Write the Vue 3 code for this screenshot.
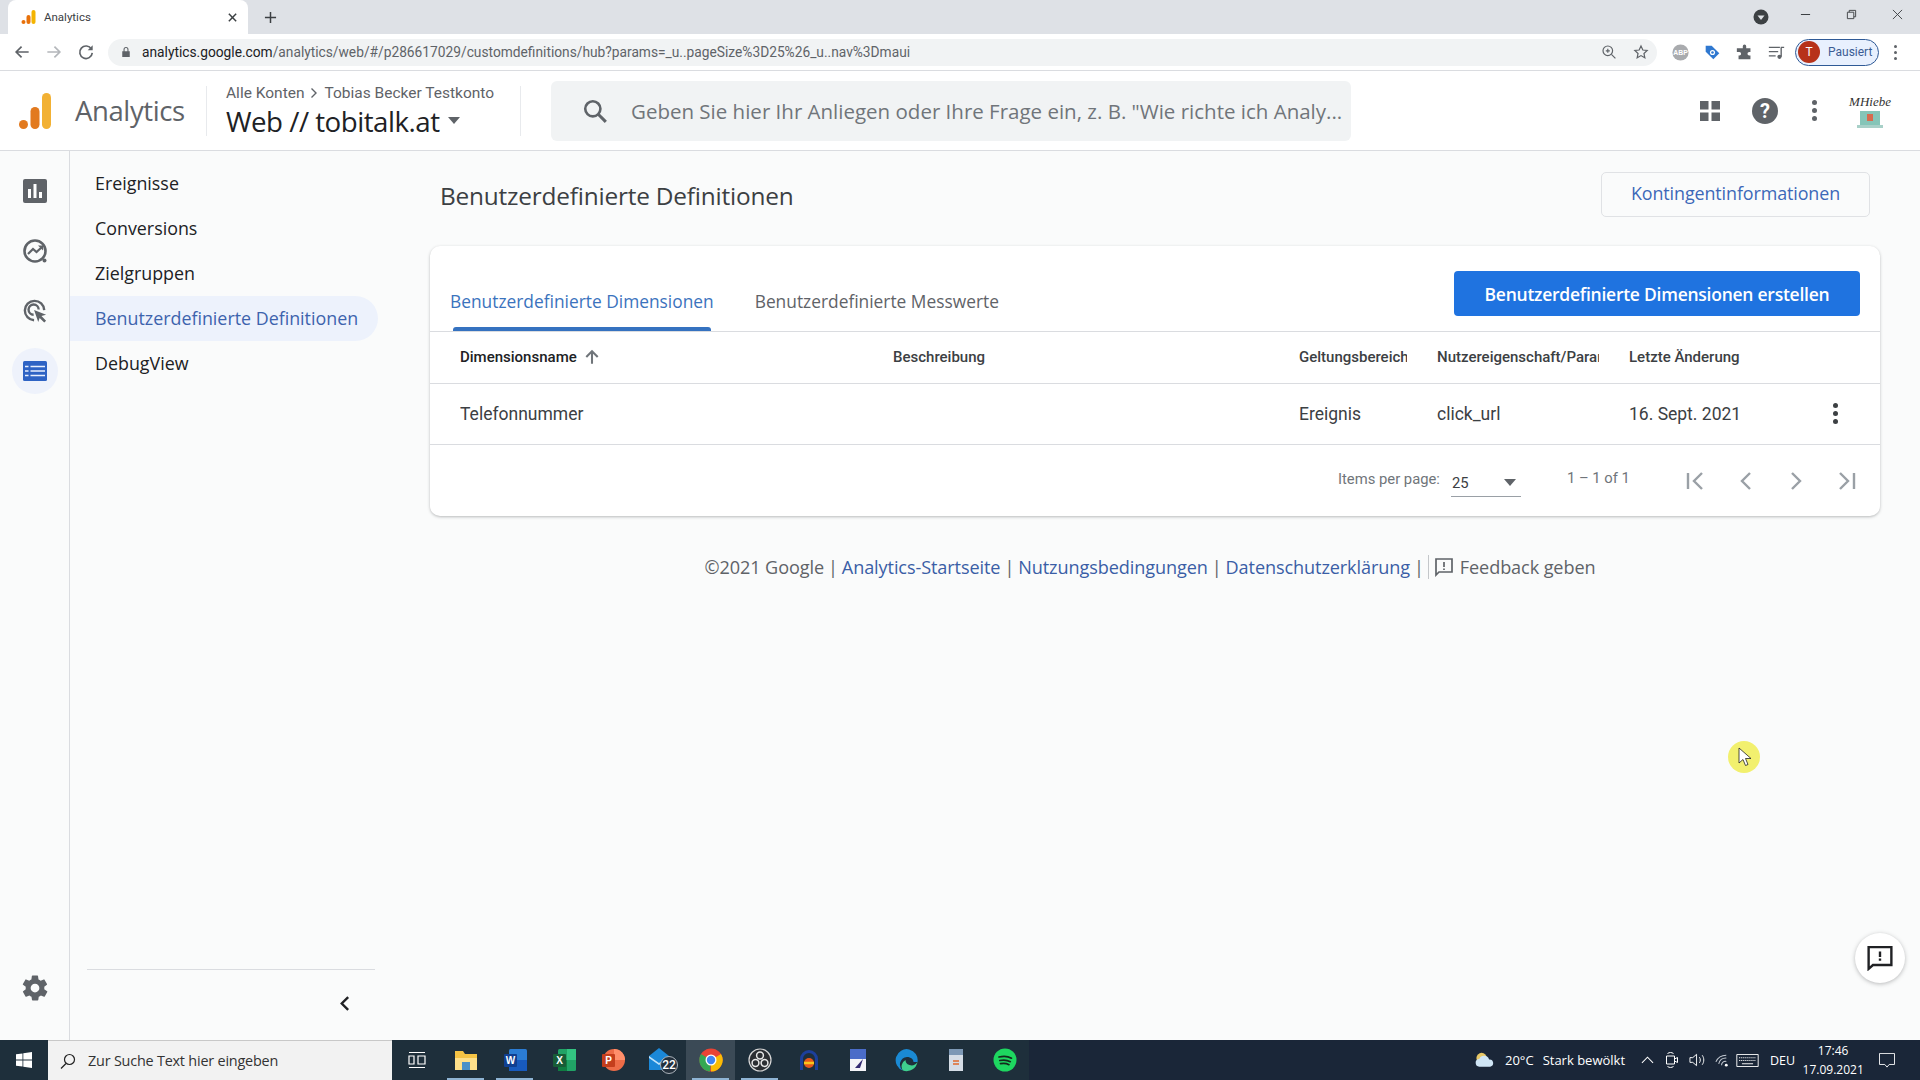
<template>
  <div class="screen">
    <!-- browser tab strip -->
    <div class="tabstrip">
      <div class="tab">
        <svg class="favicon" viewBox="0 0 16 16">
          <rect x="10.5" y="1" width="4" height="14" rx="2" fill="#f4b400" />
          <rect x="5.5" y="6" width="4" height="9" rx="2" fill="#e8710a" />
          <circle cx="2.5" cy="13" r="2" fill="#e8710a" />
        </svg>
        <span class="tab-title">Analytics</span>
        <svg class="tab-close" viewBox="0 0 12 12"><path d="M2 2l8 8M10 2l-8 8" stroke="#3c4043" stroke-width="1.6" fill="none" /></svg>
      </div>
      <svg class="tab-new" viewBox="0 0 14 14"><path d="M7 1v12M1 7h12" stroke="#3c4043" stroke-width="1.6" fill="none" /></svg>
      <div class="strip-space"></div>
      <div class="tab-search">
        <svg viewBox="0 0 16 16"><circle cx="8" cy="8" r="7.5" fill="#3c4043" /><path d="M4.5 6.5h7L8 11z" fill="#dee1e6" /></svg>
      </div>
      <div class="win-btn">
        <svg viewBox="0 0 12 12"><path d="M1 6h10" stroke="#3c4043" stroke-width="1.1" /></svg>
      </div>
      <div class="win-btn">
        <svg viewBox="0 0 12 12"><path d="M1.5 3.5h7v7h-7zM3.5 3.5v-2h7v7h-2" stroke="#3c4043" stroke-width="1" fill="none" /></svg>
      </div>
      <div class="win-btn">
        <svg viewBox="0 0 12 12"><path d="M1 1l10 10M11 1L1 11" stroke="#3c4043" stroke-width="1" /></svg>
      </div>
    </div>

    <!-- browser toolbar -->
    <div class="toolbar">
      <svg class="nav-ic" viewBox="0 0 24 24"><path d="M20 12H5M11.5 5.5L5 12l6.5 6.5" stroke="#5f6368" stroke-width="2" fill="none" /></svg>
      <svg class="nav-ic" viewBox="0 0 24 24"><path d="M4 12h15M12.5 5.5L19 12l-6.5 6.5" stroke="#b4b7bb" stroke-width="2" fill="none" /></svg>
      <svg class="nav-ic" viewBox="0 0 24 24"><path d="M18.5 8.5A7.5 7.5 0 1 0 19.5 13" stroke="#5f6368" stroke-width="2" fill="none" /><path d="M20 4v6h-6z" fill="#5f6368" /></svg>
      <div class="urlbar">
        <svg class="lock" viewBox="0 0 12 14"><path d="M3 6V4a3 3 0 0 1 6 0v2h1.5v7h-9V6zM4.300 6h3.400V4a1.700 1.700 0 0 0-3.400 0z" fill="#5f6368" /></svg>
        <span class="url"><span class="url-host">analytics.google.com</span>/analytics/web/#/p286617029/customdefinitions/hub?params=_u..pageSize%3D25%26_u..nav%3Dmaui</span>
        <svg class="url-ic" viewBox="0 0 20 20"><circle cx="8.5" cy="8.5" r="6" stroke="#5f6368" stroke-width="1.5" fill="none" /><path d="M13 13l5 5M8.5 6v5M6 8.5h5" stroke="#5f6368" stroke-width="1.5" /></svg>
        <svg class="url-ic" viewBox="0 0 20 20"><path d="M10 2.5l2.300 5 5.400.6-4 3.700 1.100 5.400-4.800-2.700-4.800 2.700 1.100-5.400-4-3.700 5.400-.6z" stroke="#5f6368" stroke-width="1.5" fill="none" /></svg>
      </div>
      <div class="ext-row">
        <svg class="ext" viewBox="0 0 20 20"><circle cx="10" cy="10" r="9.5" fill="#a9abae" /><text x="10" y="13" text-anchor="middle" class="abp">ABP</text></svg>
        <svg class="ext" viewBox="0 0 20 20"><path d="M2 2h7l9 9-7 7-9-9z" fill="#2f78d0" /><circle cx="10" cy="10" r="3" fill="#fff" /><circle cx="10" cy="10" r="1.5" fill="#2f78d0" /></svg>
        <svg class="ext" viewBox="0 0 20 20"><path d="M8 2.500a2 2 0 0 1 4 0V5h5v4.500h-1.500a2 2 0 0 0 0 4H17V18H3v-4.500h1a2 2 0 0 0 0-4H1V5h7z" fill="#5f6368" /></svg>
        <svg class="ext" viewBox="0 0 20 20"><path d="M1 4h13M1 9h11M1 14h8" stroke="#5f6368" stroke-width="1.6" /><path d="M15 4h4M15.5 4v11" stroke="#5f6368" stroke-width="1.6" /><circle cx="13.5" cy="15" r="2.5" fill="#5f6368" /></svg>
      </div>
      <div class="profile">
        <span class="profile-t">T</span>
        <span class="profile-label">Pausiert</span>
      </div>
      <div class="chrome-menu"><i></i><i></i><i></i></div>
    </div>

    <!-- analytics header -->
    <header class="app-header">
      <svg class="ga-logo" viewBox="0 0 32 36">
        <rect x="23" y="0" width="9" height="36" rx="4.5" fill="#f2b134" />
        <rect x="11.5" y="14" width="9" height="22" rx="4.5" fill="#e27a1f" />
        <circle cx="4.5" cy="31.5" r="4.5" fill="#e27a1f" />
      </svg>
      <span class="ga-name">Analytics</span>
      <div class="head-sep"></div>
      <div class="account">
        <div class="crumbs">
          <span>Alle Konten</span>
          <svg viewBox="0 0 8 12"><path d="M1.5 1.5L6 6l-4.500 4.500" stroke="#5f6368" stroke-width="1.4" fill="none" /></svg>
          <span>Tobias Becker Testkonto</span>
        </div>
        <div class="property">
          <span>Web // tobitalk.at</span>
          <i class="caret caret-big"></i>
        </div>
      </div>
      <div class="head-sep head-sep-2"></div>
      <div class="searchbox">
        <svg viewBox="0 0 24 24"><circle cx="10" cy="10" r="7" stroke="#5f6368" stroke-width="2.4" fill="none" /><path d="M15 15l7 7" stroke="#5f6368" stroke-width="2.8" /></svg>
        <span>Geben Sie hier Ihr Anliegen oder Ihre Frage ein, z. B. "Wie richte ich Analy...</span>
      </div>
      <div class="head-actions">
        <svg class="grid-ic" viewBox="0 0 20 20"><path d="M0 0h8.500v8.500H0zM11.500 0H20v8.500h-8.500zM0 11.500h8.500V20H0zM11.500 11.500H20V20h-8.500z" fill="#5f6368" /></svg>
        <svg class="help-ic" viewBox="0 0 26 26"><circle cx="13" cy="13" r="13" fill="#5f6368" /><text x="13" y="20" text-anchor="middle" class="help-q">?</text></svg>
        <div class="head-dots"><i></i><i></i><i></i></div>
        <div class="avatar">
          <span class="avatar-text">MHiebe</span>
          <svg viewBox="0 0 26 18"><rect x="3" y="0" width="20" height="14" fill="#86c5b8" /><rect x="10" y="3" width="6" height="7" fill="#d86a4f" /><rect x="0" y="14" width="26" height="3" fill="#a8d0c8" /></svg>
        </div>
      </div>
    </header>

    <div class="main">
      <!-- icon rail -->
      <aside class="rail">
        <div class="rail-item">
          <svg viewBox="0 0 24 24"><rect width="24" height="24" rx="2" fill="#5f6368" /><path d="M5 10h3v9H5zM10.5 5h3v14h-3zM16 13h3v6h-3z" fill="#fff" /></svg>
        </div>
        <div class="rail-item">
          <svg viewBox="0 0 24 24"><circle cx="12" cy="12" r="10.5" stroke="#5f6368" stroke-width="2.6" fill="none" /><path d="M5 15l5-5 3.5 3L19 8" stroke="#5f6368" stroke-width="2.2" fill="none" /><path d="M15 6.500h5v5z" fill="#5f6368" /><circle cx="21.5" cy="21.5" r="2" fill="#5f6368" /></svg>
        </div>
        <div class="rail-item">
          <svg viewBox="0 0 26 26"><path d="M12 23A10.5 10.5 0 1 1 23 12" stroke="#5f6368" stroke-width="2.6" fill="none" /><path d="M11.5 17a5.500 5.500 0 1 1 5.500-5.500" stroke="#5f6368" stroke-width="2.6" fill="none" /><path d="M12 12l13 5-5 1.500 5 5-2 2-5-5L16.500 25z" fill="#5f6368" /></svg>
        </div>
        <div class="rail-item rail-active">
          <svg viewBox="0 0 24 20"><rect width="24" height="20" rx="1.5" fill="#2e63c4" /><path d="M2 5.500h3.500M7.500 5.500H22M2 10h3.500M7.500 10H22M2 14.500h3.500M7.500 14.500H22" stroke="#e8f0fe" stroke-width="1.6" /></svg>
        </div>
        <div class="rail-space"></div>
        <div class="rail-item rail-gear">
          <svg viewBox="0 0 24 24"><path fill-rule="evenodd" fill="#5f6368" d="M19.400 13a7.600 7.600 0 0 0 0-2l2.100-1.600a.5.5 0 0 0 .1-.6l-2-3.500a.5.500 0 0 0-.6-.2l-2.500 1a7.300 7.300 0 0 0-1.700-1l-.4-2.700A.5.500 0 0 0 14 2h-4a.5.500 0 0 0-.5.400l-.4 2.700a7.300 7.300 0 0 0-1.700 1l-2.500-1a.5.500 0 0 0-.6.200l-2 3.500a.5.500 0 0 0 .1.600L4.600 11a7.600 7.600 0 0 0 0 2l-2.100 1.600a.5.500 0 0 0-.1.600l2 3.500c.1.200.4.300.6.200l2.500-1a7.300 7.300 0 0 0 1.700 1l.4 2.700c0 .2.300.4.500.4h4c.2 0 .5-.2.500-.4l.4-2.700a7.300 7.300 0 0 0 1.700-1l2.500 1c.2.100.5 0 .6-.2l2-3.500a.5.500 0 0 0-.1-.6zM12 15.500a3.500 3.500 0 1 1 0-7 3.500 3.500 0 0 1 0 7z" /></svg>
        </div>
      </aside>

      <!-- section nav -->
      <nav class="sidenav">
        <a v-for="item in navItems" :key="item" class="nav-item" :class="{ active: item === activeNav }">{{ item }}</a>
        <div class="nav-space"></div>
        <div class="nav-collapse">
          <svg viewBox="0 0 12 18"><path d="M10 2L3 9l7 7" stroke="#202124" stroke-width="2.6" fill="none" /></svg>
        </div>
      </nav>

      <!-- page content -->
      <section class="content">
        <div class="page-head">
          <h1>Benutzerdefinierte Definitionen</h1>
          <button class="quota-btn">Kontingentinformationen</button>
        </div>

        <div class="card">
          <div class="card-top">
            <div class="tabs">
              <div class="card-tab card-tab-on">Benutzerdefinierte Dimensionen</div>
              <div class="card-tab">Benutzerdefinierte Messwerte</div>
            </div>
            <button class="create-btn">Benutzerdefinierte Dimensionen erstellen</button>
          </div>

          <div class="row row-head">
            <div class="cell c-name c-strong">
              Dimensionsname
              <svg viewBox="0 0 14 14"><path d="M7 13V2M2 7l5-5 5 5" stroke="#70757a" stroke-width="1.8" fill="none" /></svg>
            </div>
            <div class="cell c-desc">Beschreibung</div>
            <div class="cell c-scope">Geltungsbereich</div>
            <div class="cell c-param">Nutzereigenschaft/Parameter</div>
            <div class="cell c-date">Letzte Änderung</div>
          </div>
          <div class="row row-body">
            <div class="cell c-name">Telefonnummer</div>
            <div class="cell c-desc"></div>
            <div class="cell c-scope">Ereignis</div>
            <div class="cell c-param">click_url</div>
            <div class="cell c-date">16. Sept. 2021</div>
            <div class="row-menu"><i></i><i></i><i></i></div>
          </div>

          <div class="paginator">
            <span class="pg-label">Items per page:</span>
            <div class="pg-select">
              <span>25</span>
              <i class="caret"></i>
            </div>
            <span class="pg-range">1 – 1 of 1</span>
            <div class="pg-buttons">
              <svg viewBox="0 0 22 22"><path d="M3 3v16M17 3l-8 8 8 8" stroke="#9aa0a6" stroke-width="2.4" fill="none" /></svg>
              <svg viewBox="0 0 22 22"><path d="M15 3l-8 8 8 8" stroke="#9aa0a6" stroke-width="2.4" fill="none" /></svg>
              <svg viewBox="0 0 22 22"><path d="M7 3l8 8-8 8" stroke="#9aa0a6" stroke-width="2.4" fill="none" /></svg>
              <svg viewBox="0 0 22 22"><path d="M19 3v16M5 3l8 8-8 8" stroke="#9aa0a6" stroke-width="2.4" fill="none" /></svg>
            </div>
          </div>
        </div>

        <footer class="page-foot">
          <span>©2021 Google</span>
          <span class="pipe">|</span>
          <a>Analytics-Startseite</a>
          <span class="pipe">|</span>
          <a>Nutzungsbedingungen</a>
          <span class="pipe">|</span>
          <a>Datenschutzerklärung</a>
          <span class="pipe">|</span>
          <span class="foot-rule"></span>
          <svg viewBox="0 0 20 20"><path d="M2 2h16v13H5l-3 3z" stroke="#5f6368" stroke-width="1.7" fill="none" /><path d="M10 5v5M10 11.500v1.500" stroke="#5f6368" stroke-width="1.7" /></svg>
          <span>Feedback geben</span>
        </footer>
      </section>
    </div>

    <!-- windows taskbar -->
    <div class="taskbar">
      <div class="start">
        <svg viewBox="0 0 16 16"><path d="M0 2.300l6.500-.9v6.200H0zM7.300 1.300L16 0v7.600H7.300zM0 8.400h6.500v6.200L0 13.700zM7.300 8.400H16V16l-8.700-1.300z" fill="#fff" /></svg>
      </div>
      <div class="win-search">
        <svg viewBox="0 0 16 16"><circle cx="9.5" cy="6.500" r="5" stroke="#222" stroke-width="1.2" fill="none" /><path d="M6 10.500L1 15.500" stroke="#222" stroke-width="1.3" /></svg>
        <span>Zur Suche Text hier eingeben</span>
      </div>
      <div class="task-icons">
        <div class="task-slot">
          <svg viewBox="0 0 20 20"><path d="M2 2.500h16M2 17.500h16M2 6h5v8H2zM11 6h7v8h-7z" stroke="#fff" stroke-width="1.2" fill="none" /></svg>
        </div>
        <div class="task-slot running">
          <svg viewBox="0 0 24 24"><path d="M1 3h8l2 3h12v16H1z" fill="#f6c445" /><path d="M1 10h22v12H1z" fill="#ffe08a" /><rect x="8" y="14" width="8" height="8" fill="#4a90c8" /></svg>
        </div>
        <div class="task-slot running">
          <svg viewBox="0 0 24 24"><rect x="6" y="1" width="18" height="22" rx="1.5" fill="#2b7cd3" /><rect x="6" y="12" width="18" height="11" fill="#185abd" /><rect x="1" y="6" width="13" height="13" rx="1" fill="#103f91" /><text x="7.5" y="16" text-anchor="middle" class="tile-t">W</text></svg>
        </div>
        <div class="task-slot">
          <svg viewBox="0 0 24 24"><rect x="6" y="1" width="18" height="22" rx="1.5" fill="#21a366" /><rect x="15" y="1" width="9" height="11" fill="#33c481" /><rect x="6" y="12" width="9" height="11" fill="#107c41" /><rect x="1" y="6" width="13" height="13" rx="1" fill="#185c37" /><text x="7.5" y="16" text-anchor="middle" class="tile-t">X</text></svg>
        </div>
        <div class="task-slot">
          <svg viewBox="0 0 24 24"><circle cx="13" cy="12" r="11" fill="#ed6c47" /><path d="M13 1a11 11 0 0 1 11 11H13z" fill="#ff8f6b" /><rect x="1" y="6" width="13" height="13" rx="1" fill="#c43e1c" /><text x="7.5" y="16" text-anchor="middle" class="tile-t">P</text></svg>
        </div>
        <div class="task-slot">
          <svg class="mail-ic" viewBox="0 0 28 26"><path d="M1 9L11 1l10 8v14H1z" fill="#1b88d8" /><path d="M1 9l10 7 10-7v2l-10 7-10-7z" fill="#bfe3fb" /></svg>
          <span class="mail-badge">22</span>
        </div>
        <div class="task-slot task-active">
          <svg viewBox="0 0 24 24"><circle cx="12" cy="12" r="11.5" fill="#ea4335" /><path d="M12 12L22 6a11.500 11.500 0 0 1-10 17.500z" fill="#fbbc05" /><path d="M12 12l-1 11.500A11.500 11.500 0 0 1 2 6z" fill="#34a853" /><circle cx="12" cy="12" r="5.5" fill="#fff" /><circle cx="12" cy="12" r="4.2" fill="#4285f4" /></svg>
        </div>
        <div class="task-slot running">
          <svg viewBox="0 0 24 24"><circle cx="12" cy="12" r="11" fill="#2b2e32" stroke="#d8d8d8" stroke-width="1.2" /><circle cx="12" cy="7.5" r="3.4" fill="none" stroke="#e8e8e8" stroke-width="1.5" /><circle cx="7.5" cy="15" r="3.4" fill="none" stroke="#e8e8e8" stroke-width="1.5" /><circle cx="16.5" cy="15" r="3.4" fill="none" stroke="#e8e8e8" stroke-width="1.5" /></svg>
        </div>
        <div class="task-slot">
          <svg viewBox="0 0 24 24"><path d="M3 22V11a9 9 0 0 1 18 0v11h-3V11a6 6 0 0 0-12 0v11z" fill="#1c3f9c" /><circle cx="12" cy="15" r="5" fill="#e8561c" /><path d="M7 15h10" stroke="#f8c51c" stroke-width="2.5" /></svg>
        </div>
        <div class="task-slot">
          <svg viewBox="0 0 24 24"><rect x="4" y="1" width="16" height="22" fill="#f4f4f8" /><rect x="4" y="1" width="16" height="10" fill="#4a6cc8" /><path d="M9 20l8-9-3 9z" fill="#332a72" /></svg>
        </div>
        <div class="task-slot">
          <svg viewBox="0 0 24 24"><path d="M22.500 14A11 11 0 1 0 8 22.500 7.500 7.500 0 0 1 12 9c4 0 6.500 2.500 6.500 5z" fill="#1a8ad4" /><path d="M8 22.500A11 11 0 0 0 22.500 14c-2 3-5 4-8 3-3-.5-4-3-4-5a7 7 0 0 0-2.500 10.500z" fill="#3fcf8e" /></svg>
        </div>
        <div class="task-slot">
          <svg viewBox="0 0 24 24"><path d="M5 1h14v22H5z" fill="#d5dde6" /><path d="M5 1h14v6H5z" fill="#7d98b5" /><path d="M9 13h6M9 16h6" stroke="#e06a2c" stroke-width="1.3" /></svg>
        </div>
        <div class="task-slot">
          <svg viewBox="0 0 24 24"><circle cx="12" cy="12" r="11.5" fill="#1ed760" /><path d="M6 9c4-1 9-.8 12.500 1.200M6.800 12.500c3.500-.8 7.500-.5 10.500 1.200M7.500 15.700c3-.6 6-.4 8.500 1" stroke="#14291d" stroke-width="1.7" stroke-linecap="round" fill="none" /></svg>
        </div>
      </div>
      <div class="tray">
        <svg class="weather" viewBox="0 0 22 16"><circle cx="8" cy="6" r="5.5" fill="#e8c766" /><path d="M6 15a4 4 0 0 1-.5-8 5.500 5.500 0 0 1 10.300.500A3.800 3.800 0 0 1 17 15z" fill="#cfe5f5" /></svg>
        <span class="tray-temp">20°C</span>
        <span class="tray-sky">Stark bewölkt</span>
        <svg class="t-caret" viewBox="0 0 14 8"><path d="M1 7l6-6 6 6" stroke="#fff" stroke-width="1.1" fill="none" /></svg>
        <svg class="t-ic" viewBox="0 0 14 18"><path d="M2 5h8v8H2zM10 8l3-1.500v5L10 10M3 2.500c2-1.300 4-1.300 6 0M3 15.500c2 1.300 4 1.300 6 0" stroke="#fff" stroke-width="1" fill="none" /></svg>
        <svg class="t-ic" viewBox="0 0 18 18"><path d="M1 6.500h3L8 3v12l-4-3.500H1zM11 6c1.300 1.800 1.300 4.200 0 6M14 4c2.200 3 2.200 7 0 10" stroke="#fff" stroke-width="1" fill="none" /></svg>
        <svg class="t-ic t-wifi" viewBox="0 0 18 18"><path d="M2 11a12 12 0 0 1 11-7M5 13a8 8 0 0 1 8-6M8 14.500a4 4 0 0 1 5-4" stroke="#c5cbd3" stroke-width="1.1" fill="none" /><circle cx="13" cy="14.500" r="1.5" fill="#fff" /></svg>
        <svg class="t-kbd" viewBox="0 0 24 14"><path d="M.5.500h23v13H.5z" stroke="#fff" fill="none" /><path d="M3 4h18M3 7h18" stroke="#fff" stroke-width="1.2" stroke-dasharray="1.2 1" /><path d="M6 10.500h12" stroke="#fff" /></svg>
        <span class="tray-lang">DEU</span>
        <div class="tray-clock">
          <span>17:46</span>
          <span>17.09.2021</span>
        </div>
        <svg class="t-note" viewBox="0 0 18 17"><path d="M.5.500h17v12.500h-6l-2.500 3-2.500-3h-6z" stroke="#fff" fill="none" /></svg>
      </div>
    </div>

    <!-- floating feedback button -->
    <div class="fab">
      <svg viewBox="0 0 24 24"><path d="M1.500 2h21v16.500H5.500l-4 3.500z" stroke="#202124" stroke-width="2.2" fill="none" /><path d="M12 6v5M12 12.500v2" stroke="#202124" stroke-width="2.2" /></svg>
    </div>

    <!-- recorded mouse pointer -->
    <div class="pointer">
      <svg viewBox="0 0 14 20"><path d="M1 1v15l4-3.500 2.500 6 2.500-1-2.500-6H13z" fill="#fff" stroke="#222" stroke-width="0.8" /></svg>
    </div>
  </div>
</template>

<script setup>
const navItems = ['Ereignisse', 'Conversions', 'Zielgruppen', 'Benutzerdefinierte Definitionen', 'DebugView']
const activeNav = 'Benutzerdefinierte Definitionen'
</script>

<style>
html,
body {
  margin: 0;
  padding: 0;
  background: #fafbfb;
}
</style>

<style scoped>
.screen {
  position: relative;
  width: 1920px;
  height: 1080px;
  overflow: hidden;
  display: flex;
  flex-direction: column;
  background: #fafbfb;
  font-family: Roboto, "Liberation Sans", sans-serif;
  color: #202124;
}

/* tab strip */
.tabstrip {
  height: 34px;
  flex: none;
  display: flex;
  align-items: flex-end;
  background: #dee1e6;
}

.tab {
  width: 240px;
  height: 34px;
  margin-left: 8px;
  background: #fff;
  border-radius: 8px 8px 0 0;
  display: flex;
  align-items: center;
  box-sizing: border-box;
  padding: 0 10px 0 13px;
}

.favicon {
  width: 16px;
  height: 16px;
}

.tab-title {
  margin-left: 7px;
  flex: 1;
  font-size: 11.500px;
  color: #3c4043;
}

.tab-close {
  width: 11px;
  height: 11px;
}

.tab-new {
  width: 13px;
  height: 13px;
  margin: 0 0 10px 16px;
}

.strip-space {
  flex: 1;
}

.tab-search {
  width: 16px;
  height: 16px;
  margin: 0 13px 9px 0;
  display: flex;
}

.win-btn {
  width: 46px;
  height: 28px;
  display: flex;
  align-items: center;
  justify-content: center;
  align-self: flex-start;
}

.win-btn svg {
  width: 11px;
  height: 11px;
}

/* toolbar */
.toolbar {
  height: 36px;
  flex: none;
  display: flex;
  align-items: center;
  background: #fff;
  border-bottom: 1px solid #dadce0;
}

.nav-ic {
  width: 20px;
  height: 20px;
  margin-left: 12px;
}

.urlbar {
  width: 1549px;
  height: 27px;
  margin-left: 12px;
  border-radius: 14px;
  background: #f1f3f4;
  display: flex;
  align-items: center;
  box-sizing: border-box;
  padding: 0 8px 0 13px;
}

.lock {
  width: 10px;
  height: 12px;
}

.url {
  margin-left: 11px;
  flex: 1;
  font-size: 13.750px;
  color: #5f6368;
  white-space: nowrap;
}

.url-host {
  color: #202124;
}

.url-ic {
  width: 16px;
  height: 16px;
  margin-left: 16px;
}

.ext-row {
  display: flex;
  gap: 15px;
  margin-left: 15px;
}

.ext {
  width: 17px;
  height: 17px;
}

.abp {
  font-size: 8px;
  font-weight: 700;
  fill: #fff;
  font-family: "Liberation Sans", sans-serif;
}

.profile {
  width: 84px;
  height: 27px;
  margin-left: 10px;
  box-sizing: border-box;
  border: 1px solid #2f5a96;
  border-radius: 14px;
  background: #e8f0fe;
  display: flex;
  align-items: center;
}

.profile-t {
  width: 22px;
  height: 22px;
  margin-left: 2px;
  border-radius: 50%;
  background: #b7321a;
  color: #fff;
  font-size: 12px;
  display: flex;
  align-items: center;
  justify-content: center;
}

.profile-label {
  margin-left: 8px;
  font-size: 12px;
  color: #3b5c94;
}

.chrome-menu {
  margin-left: 15px;
  display: flex;
  flex-direction: column;
  gap: 3px;
}

.chrome-menu i {
  width: 3px;
  height: 3px;
  border-radius: 50%;
  background: #5f6368;
}

/* app header */
.app-header {
  height: 79px;
  flex: none;
  display: flex;
  align-items: center;
  background: #fff;
  border-bottom: 1px solid #dadce0;
}

.ga-logo {
  width: 32px;
  height: 36px;
  margin-left: 19px;
}

.ga-name {
  margin-left: 24px;
  width: 111px;
  font-family: "Open Sans", sans-serif;
  font-size: 27.500px;
  letter-spacing: -0.4px;
  color: #5f6368;
}

.head-sep {
  width: 1px;
  height: 50px;
  margin-left: 20px;
  background: #e8eaed;
}

.head-sep-2 {
  margin-left: 0;
}

.account {
  width: 294px;
  margin-left: 19px;
  display: flex;
  flex-direction: column;
}

.crumbs {
  display: flex;
  align-items: center;
  gap: 6px;
  font-size: 15.500px;
  line-height: 20px;
  color: #5f6368;
}

.crumbs svg {
  width: 8px;
  height: 12px;
}

.property {
  display: flex;
  align-items: center;
  font-family: "Open Sans", sans-serif;
  font-size: 27.700px;
  line-height: 36px;
  letter-spacing: -0.5px;
  color: #202124;
}

.caret {
  width: 0;
  height: 0;
  border-left: 6px solid transparent;
  border-right: 6px solid transparent;
  border-top: 7px solid #5f6368;
}

.caret-big {
  margin-left: 8px;
}

.searchbox {
  width: 800px;
  height: 60px;
  border-radius: 6px;
  background: #f1f3f4;
  margin-left: 30px;
  display: flex;
  align-items: center;
  font-family: "Open Sans", sans-serif;
  font-size: 20.500px;
  color: #70757a;
  white-space: nowrap;
}

.searchbox svg {
  width: 26px;
  height: 26px;
  margin: 0 23px 0 31px;
}

.head-actions {
  flex: 1;
  display: flex;
  align-items: center;
}

.grid-ic {
  width: 20px;
  height: 20px;
  margin-left: 349px;
}

.help-ic {
  width: 26px;
  height: 26px;
  margin-left: 32px;
}

.help-q {
  font-size: 20px;
  font-weight: 700;
  fill: #fff;
  font-family: Roboto, sans-serif;
}

.head-dots {
  margin-left: 34px;
  display: flex;
  flex-direction: column;
  gap: 3px;
}

.head-dots i {
  width: 5px;
  height: 5px;
  border-radius: 50%;
  background: #5f6368;
}

.avatar {
  width: 34px;
  margin-left: 36px;
  display: flex;
  flex-direction: column;
  align-items: center;
}

.avatar svg {
  width: 26px;
  height: 18px;
}

.avatar-text {
  font-family: "Liberation Serif", serif;
  font-style: italic;
  font-size: 13px;
  line-height: 18px;
  color: #333;
}

/* main area */
.main {
  flex: 1;
  display: flex;
  min-height: 0;
}

.rail {
  width: 70px;
  flex: none;
  box-sizing: border-box;
  padding-top: 17px;
  border-right: 1px solid #dadce0;
  display: flex;
  flex-direction: column;
  background: #fafbfb;
}

.rail-item {
  height: 46px;
  width: 46px;
  margin: 0 0 14px 12px;
  border-radius: 50%;
  display: flex;
  align-items: center;
  justify-content: center;
}

.rail-item svg {
  width: 24px;
  height: 24px;
}

.rail-active {
  background: #eef2fb;
}

.rail-active svg {
  height: 20px;
}

.rail-space {
  flex: 1;
}

.rail-gear {
  margin-bottom: 29px;
}

.rail-gear svg {
  width: 30px;
  height: 30px;
}

.sidenav {
  width: 308px;
  flex: none;
  box-sizing: border-box;
  padding-top: 10px;
  display: flex;
  flex-direction: column;
}

.nav-item {
  height: 45px;
  width: 308px;
  flex: none;
  box-sizing: border-box;
  padding: 0 0 1px 25px;
  display: flex;
  align-items: center;
  border-radius: 0 23px 23px 0;
  font-family: "Open Sans", sans-serif;
  font-size: 17.850px;
  color: #202124;
}

.nav-item.active {
  background: #edf2fc;
  color: #3d63ad;
}

.nav-space {
  flex: 1;
}

.nav-collapse {
  margin: 0 3px 0 17px;
  height: 66px;
  padding: 0 25px 4px 0;
  border-top: 1px solid #dadce0;
  display: flex;
  justify-content: flex-end;
  align-items: center;
}

.nav-collapse svg {
  width: 11px;
  height: 17px;
}

.content {
  flex: 1;
  min-width: 0;
  padding: 0 40px 0 52px;
}

.page-head {
  height: 95px;
  box-sizing: border-box;
  display: flex;
  align-items: flex-start;
  justify-content: space-between;
  padding: 21px 10px 0 10px;
}

.page-head h1 {
  margin: 7px 0 0;
  font-family: "Open Sans", sans-serif;
  font-weight: 400;
  font-size: 24.400px;
  line-height: 34px;
  letter-spacing: -0.2px;
  color: #3c4043;
}

.quota-btn {
  width: 269px;
  height: 45px;
  padding: 0 0 3px;
  border: 1px solid #e0e2e5;
  border-radius: 5px;
  background: #fafbfb;
  font-family: "Open Sans", sans-serif;
  font-size: 17.900px;
  font-weight: 500;
  letter-spacing: -0.1px;
  color: #3d68b8;
}

/* card */
.card {
  height: 270px;
  background: #fff;
  border-radius: 10px;
  box-shadow: 0 1px 3px rgba(60, 64, 67, 0.35);
}

.card-top {
  height: 86px;
  box-sizing: border-box;
  display: flex;
  justify-content: space-between;
  padding: 25px 20px 0 0;
  border-bottom: 1px solid #dadce0;
}

.tabs {
  display: flex;
  padding-left: 20px;
  gap: 41px;
}

.card-tab {
  height: 60px;
  padding-top: 18px;
  box-sizing: border-box;
  font-family: "Open Sans", sans-serif;
  font-size: 17.350px;
  color: #5f6368;
}

.card-tab-on {
  color: #3b73bd;
  position: relative;
}

.card-tab-on::after {
  content: '';
  position: absolute;
  left: 3px;
  right: 3px;
  bottom: 0;
  height: 4px;
  border-radius: 3px 3px 0 0;
  background: #3572c0;
}

.create-btn {
  width: 406px;
  height: 45px;
  border: 0;
  border-radius: 4px;
  background: #1f73e0;
  color: #fff;
  font-family: "Open Sans", sans-serif;
  font-size: 17.500px;
  font-weight: 600;
  letter-spacing: -0.25px;
}

.row {
  display: flex;
  align-items: center;
  position: relative;
  box-sizing: border-box;
  border-bottom: 1px solid #dadce0;
}

.row-head {
  height: 52px;
  padding-bottom: 2px;
  font-size: 15px;
  font-weight: 500;
  color: #3c4043;
}

.row-body {
  height: 61px;
  font-size: 17.500px;
  color: #3c4043;
}

.cell {
  flex: none;
  box-sizing: border-box;
  margin-left: 30px;
  white-space: nowrap;
  overflow: hidden;
}

.c-name {
  width: 403px;
  display: flex;
  align-items: center;
}

.c-strong {
  color: #202124;
}

.c-name svg {
  width: 16px;
  height: 16px;
  margin-left: 7px;
}

.c-desc {
  width: 376px;
}

.c-scope {
  width: 108px;
}

.c-param {
  width: 162px;
}

.c-date {
  width: 190px;
}

.row-menu {
  position: absolute;
  right: 42px;
  top: 19px;
  display: flex;
  flex-direction: column;
  gap: 3px;
}

.row-menu i {
  width: 5px;
  height: 5px;
  border-radius: 50%;
  background: #3c4043;
}

.paginator {
  height: 71px;
  display: flex;
  align-items: center;
  font-size: 14.800px;
  color: #70757a;
}

.pg-label {
  margin: 0 0 3px 908px;
}

.pg-select {
  width: 70px;
  height: 28px;
  margin: 5px 0 0 11px;
  box-sizing: border-box;
  border-bottom: 1px solid #9aa0a6;
  display: flex;
  align-items: center;
  justify-content: space-between;
  padding: 0 5px 0 1px;
  color: #3c4043;
}

.pg-range {
  margin: 0 0 5px 46px;
}

.pg-buttons {
  display: flex;
  gap: 28px;
  margin: 0 0 0 55px;
}

.pg-buttons svg {
  width: 22px;
  height: 22px;
}

/* page footer */
.page-foot {
  margin-top: 37px;
  height: 28px;
  display: flex;
  align-items: center;
  justify-content: center;
  gap: 4px;
  padding-right: 10px;
  font-family: "Open Sans", sans-serif;
  font-size: 18.100px;
  letter-spacing: -0.1px;
  color: #5f6368;
}

.page-foot a {
  color: #3a5ea6;
}

.page-foot svg {
  width: 20px;
  height: 20px;
  margin: 0 2px 0 1px;
}

.foot-rule {
  width: 1px;
  height: 24px;
  background: #c4c7ca;
}

/* taskbar */
.taskbar {
  height: 40px;
  flex: none;
  display: flex;
  align-items: center;
  background: #1e2f3b;
}

.start {
  width: 48px;
  height: 40px;
  display: flex;
  align-items: center;
  justify-content: center;
}

.start svg {
  width: 16px;
  height: 16px;
}

.win-search {
  width: 344px;
  height: 40px;
  box-sizing: border-box;
  padding-left: 12px;
  background: #f2f2f2;
  border-top: 1px solid #c8c8c8;
  display: flex;
  align-items: center;
  font-family: "Open Sans", sans-serif;
  font-size: 14.400px;
  letter-spacing: -0.2px;
  color: #333;
}

.win-search svg {
  width: 16px;
  height: 16px;
  margin-right: 12px;
}

.task-icons {
  display: flex;
}

.task-slot {
  position: relative;
  width: 49px;
  height: 40px;
  display: flex;
  align-items: center;
  justify-content: center;
}

.task-slot svg {
  width: 24px;
  height: 24px;
}

.task-slot:first-child svg {
  width: 20px;
  height: 20px;
}

.task-slot.running::after,
.task-active::after {
  content: '';
  position: absolute;
  left: 6px;
  right: 6px;
  bottom: 0;
  height: 2px;
  background: #8fb4d4;
}

.task-active {
  background: #3b4a56;
}

.mail-ic {
  width: 28px !important;
  height: 26px !important;
}

.mail-badge {
  position: absolute;
  right: 8px;
  bottom: 6px;
  width: 18px;
  height: 18px;
  border-radius: 50%;
  background: #24303c;
  border: 1px solid #aab2ba;
  box-sizing: border-box;
  color: #fff;
  font-size: 12px;
  font-weight: 500;
  display: flex;
  align-items: center;
  justify-content: center;
}

.tile-t {
  font-size: 10px;
  font-weight: 700;
  fill: #fff;
  font-family: "Liberation Sans", sans-serif;
}

.tray {
  flex: 1;
  height: 40px;
  display: flex;
  align-items: center;
  background: #1a2638;
  color: #fff;
  font-family: "Open Sans", sans-serif;
  font-size: 13px;
}

.weather {
  width: 21px;
  height: 16px;
  margin-left: 445px;
}

.tray-temp {
  margin-left: 10px;
}

.tray-sky {
  margin-left: 9px;
}

.t-caret {
  width: 13px;
  height: 8px;
  margin-left: 16px;
}

.t-ic {
  width: 17px;
  height: 18px;
  margin-left: 9px;
}

.t-wifi {
  margin-left: 8px;
}

.t-kbd {
  width: 23px;
  height: 13px;
  margin-left: 5px;
}

.tray-lang {
  margin-left: 11px;
  font-size: 12.500px;
}

.tray-clock {
  width: 64px;
  margin-left: 6px;
  display: flex;
  flex-direction: column;
  align-items: center;
  font-size: 12px;
  line-height: 19px;
}

.t-note {
  width: 16px;
  height: 15px;
  margin-left: 14px;
}

/* overlays */
.fab {
  position: absolute;
  left: 1855px;
  top: 933px;
  width: 50px;
  height: 50px;
  border-radius: 50%;
  background: #fff;
  box-shadow: 0 1px 4px rgba(60, 64, 67, 0.35);
  display: flex;
  align-items: center;
  justify-content: center;
}

.fab svg {
  width: 26px;
  height: 26px;
}

.pointer {
  position: absolute;
  left: 1728px;
  top: 741px;
  width: 32px;
  height: 32px;
  border-radius: 50%;
  background: #f2f06e;
}

.pointer svg {
  position: absolute;
  left: 10px;
  top: 6px;
  width: 14px;
  height: 20px;
}
</style>
